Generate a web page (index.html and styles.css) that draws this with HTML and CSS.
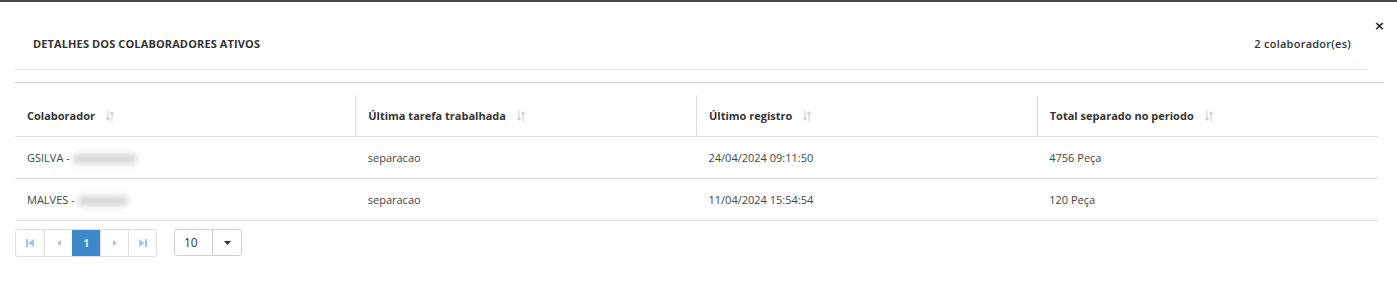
FILE: index.html
```html
<!DOCTYPE html>
<html>
<head>
<meta charset="utf-8">
<link rel="stylesheet" href="styles.css">
</head>
<body>
<div class="modal">
  <button class="close">×</button>
  <div class="head">
    <div class="title">DETALHES DOS COLABORADORES ATIVOS</div>
    <div class="count">2 colaborador(es)</div>
  </div>
  <div class="sep"></div>
  <table class="grid">
    <thead>
      <tr>
        <th>Colaborador <svg class="sort" width="8" height="10" viewBox="0 0 8 10"><path d="M2 0 V8.5 M0.3 6.8 L2 9 L3.7 6.8 M6 10 V1.5 M4.3 3.2 L6 1 L7.7 3.2"/></svg></th>
        <th>Última tarefa trabalhada <svg class="sort" width="8" height="10" viewBox="0 0 8 10"><path d="M2 0 V8.5 M0.3 6.8 L2 9 L3.7 6.8 M6 10 V1.5 M4.3 3.2 L6 1 L7.7 3.2"/></svg></th>
        <th>Último registro <svg class="sort" width="8" height="10" viewBox="0 0 8 10"><path d="M2 0 V8.5 M0.3 6.8 L2 9 L3.7 6.8 M6 10 V1.5 M4.3 3.2 L6 1 L7.7 3.2"/></svg></th>
        <th>Total separado no periodo <svg class="sort" width="8" height="10" viewBox="0 0 8 10"><path d="M2 0 V8.5 M0.3 6.8 L2 9 L3.7 6.8 M6 10 V1.5 M4.3 3.2 L6 1 L7.7 3.2"/></svg></th>
      </tr>
    </thead>
    <tbody>
      <tr>
        <td>GSILVA - <span class="blur w1"></span></td>
        <td>separacao</td>
        <td>24/04/2024 09:11:50</td>
        <td>4756 Peça</td>
      </tr>
      <tr>
        <td>MALVES - <span class="blur w2"></span></td>
        <td>separacao</td>
        <td>11/04/2024 15:54:54</td>
        <td>120 Peça</td>
      </tr>
    </tbody>
  </table>
  <div class="pager">
    <div class="pages">
      <span class="pg"><svg width="8" height="8" viewBox="0 0 8 8"><rect x="0" y="0" width="2" height="8"/><path d="M8 0 L2 4 L8 8 Z"/></svg></span>
      <span class="pg"><svg width="4" height="6" viewBox="0 0 4 6"><path d="M4 0 L0 3 L4 6 Z"/></svg></span>
      <span class="pg active">1</span>
      <span class="pg"><svg width="4" height="6" viewBox="0 0 4 6"><path d="M0 0 L4 3 L0 6 Z"/></svg></span>
      <span class="pg"><svg width="8" height="8" viewBox="0 0 8 8"><path d="M0 0 L6 4 L0 8 Z"/><rect x="6" y="0" width="2" height="8"/></svg></span>
    </div>
    <div class="size">
      <span class="val">10</span>
      <span class="caret"><svg width="7" height="4" viewBox="0 0 7 4"><path d="M0 0 L7 0 L3.5 4 Z"/></svg></span>
    </div>
  </div>
</div>
</body>
</html>
```
FILE: styles.css
```css
* { box-sizing: border-box; }
html, body { margin: 0; padding: 0; background: #fff; }
body {
  font-family: "Open Sans", "Noto Sans", sans-serif;
  font-size: 11px;
  color: #333;
  border-top: 2px solid #474747;
  height: 283px;
}
.modal { position: relative; padding: 0 13px 0 15px; }
.close {
  position: absolute;
  top: 17px;
  right: 12px;
  border: 0;
  background: none;
  padding: 0;
  font-family: "DejaVu Sans", sans-serif;
  font-size: 13px;
  font-weight: bold;
  color: #222;
  line-height: 14px;
}
.head {
  display: flex;
  justify-content: space-between;
  align-items: center;
  height: 68px;
  padding: 16px 17px 0 18px;
  margin-right: 16px;
  border-bottom: 1px solid #e4e4e4;
}
.title { font-weight: 700; color: #333; font-size: 11px; letter-spacing: 0.12px; }
.count { font-weight: 600; color: #333; font-size: 11px; letter-spacing: 0.25px; }
.sep { margin-top: 12px; border-top: 1px solid #cfcfcf; }
.grid {
  margin-top: 12px;
  width: 1363px;
  border-collapse: collapse;
  table-layout: fixed;
}
.grid th {
  text-align: left;
  font-weight: 700;
  height: 41px;
  padding: 0 12px;
  border-bottom: 1px solid #dedede;
  border-right: 1px solid #dedede;
  color: #333;
}
.grid th:last-child { border-right: 0; }
.grid td {
  height: 42px;
  padding: 0 12px;
  border-bottom: 1px solid #dedede;
  color: #444;
}
.sort {
  margin-left: 8px;
  vertical-align: -1px;
  fill: none;
  stroke: #cfcfcf;
  stroke-width: 1.2;
}
.blur {
  display: inline-block;
  height: 10px;
  vertical-align: middle;
  background: #d6d6d6;
  filter: blur(3px);
  border-radius: 3px;
}
.w1 { width: 64px; }
.w2 { width: 50px; }
.pager { display: flex; align-items: center; gap: 17px; margin-top: 8px; }
.pages { display: flex; border: 1px solid #e0e0e0; border-radius: 3px; overflow: hidden; }
.pg {
  width: 28px;
  height: 26px;
  display: flex;
  align-items: center;
  justify-content: center;
  border-left: 1px solid #e0e0e0;
  fill: #a9c5e2;
}
.pg:first-child { border-left: 0; }
.pg.active { background: #3d89cc; color: #fff; border-left-color: #3d89cc; font-weight: 600; }
.size { display: flex; border: 1px solid #cfcfcf; border-radius: 3px; height: 27px; }
.val { width: 38px; display: flex; align-items: center; padding-left: 9px; border-right: 1px solid #cfcfcf; color: #333; font-size: 12px; }
.caret { width: 28px; display: flex; align-items: center; justify-content: center; fill: #333; }
```
